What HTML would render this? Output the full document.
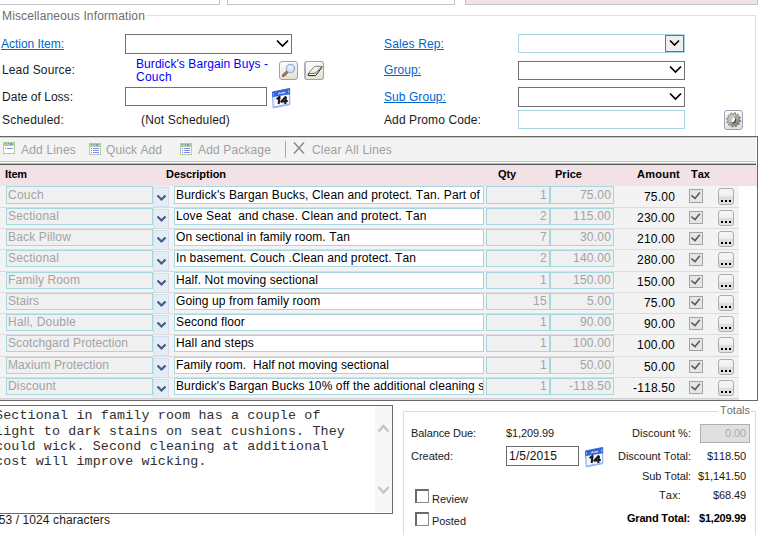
<!DOCTYPE html><html><head><meta charset="utf-8"><style>
*{box-sizing:border-box;margin:0;padding:0}
html,body{width:777px;height:535px;overflow:hidden;background:#fff}
body{position:relative;font-family:"Liberation Sans",sans-serif;font-size:12px;color:#000}
.a{position:absolute}
.tx{position:absolute;white-space:pre;font-kerning:none;font-family:"Liberation Sans",sans-serif}
.box{position:absolute;border:1px solid #707070;background:#fff}
.lb{position:absolute;border:1px solid #a9d5e2;background:#fff}
.ib{position:absolute;border:1px solid #a6d7e0;background:#f0f0f0}
.db{position:absolute;border:1px solid #a9d5e2;background:#fff}
.dd{position:absolute;background:#e4ecf6;border:1px solid #d3deea}
.sep{position:absolute;left:0;width:739px;height:1px;background:#dcdcdc}
.cb{position:absolute;width:14px;height:14px;border:1px solid #a3a3a3;background:#e6e6e6}
.btn{position:absolute;width:16px;height:17px;border:1px solid #adadad;border-radius:3px;background:linear-gradient(#f6f6f6,#f0f0f0 45%,#dcdcdc 55%,#e2e2e2)}
.ibtn{position:absolute;border:1px solid #9e9eb6;border-radius:3px;background:linear-gradient(165deg,#ffffff 0%,#f3f4ec 40%,#dce0c8 100%)}
</style></head><body>
<div class="a" style="left:-5px;top:-20px;width:225px;height:25px;border:1px solid #c4c4c4"></div>
<div class="a" style="left:227px;top:-20px;width:228px;height:25px;border:1px solid #c4c4c4"></div>
<div class="a" style="left:465px;top:-20px;width:293px;height:25px;border:1px solid #c4c4c4;background:#f2e1e5"></div>
<div class="a" style="left:146px;top:15px;width:610px;height:1px;background:#e0e0e0"></div>
<div class="a" style="left:755px;top:15px;width:1px;height:121px;background:#e0e0e0"></div>
<div class="tx" style="left:2.00px;top:9px;font-size:12px;line-height:14px;letter-spacing:0.144px;color:#6d6d6d;">Miscellaneous Information</div>
<div class="tx" style="left:1.00px;top:37px;font-size:12px;line-height:14px;letter-spacing:-0.030px;color:#0066cc;text-decoration:underline">Action Item:</div>
<div class="box" style="left:125px;top:34px;width:167px;height:20px"></div>
<svg class="a" style="left:276px;top:39px" width="13" height="9" viewBox="0 0 13 9"><path d="M1 1.5 L6.5 7 L12 1.5" fill="none" stroke="#000" stroke-width="1.75"/></svg>
<div class="tx" style="left:2.00px;top:63px;font-size:12px;line-height:14px;letter-spacing:0.135px;color:#1a1a1a;">Lead Source:</div>
<div class="tx" style="left:136.00px;top:57px;font-size:12px;line-height:14px;letter-spacing:0.069px;color:#0000ff;">Burdick&#x27;s Bargain Buys -</div>
<div class="tx" style="left:136.00px;top:70px;font-size:12px;line-height:14px;letter-spacing:0.263px;color:#0000ff;">Couch</div>
<div class="ibtn" style="left:279px;top:61px;width:19px;height:19px"></div>
<svg class="a" style="left:279px;top:61px" width="19" height="19" viewBox="0 0 19 19">
<defs><radialGradient id="lens" cx="0.45" cy="0.4" r="0.6"><stop offset="0" stop-color="#f4f8ff"/><stop offset="1" stop-color="#c4d4f2"/></radialGradient></defs>
<path d="M4.3 14.6 L8.4 10.8" stroke="#7a5230" stroke-width="2.8" stroke-linecap="round"/>
<path d="M4.3 14.6 L8.4 10.8" stroke="#b98050" stroke-width="1.4" stroke-linecap="round"/>
<circle cx="11.5" cy="7.5" r="4.2" fill="url(#lens)" stroke="#95a6cc" stroke-width="1.1"/>
</svg>
<div class="ibtn" style="left:304px;top:61px;width:20px;height:19px;border-left:2px solid #b0b0c4"></div>
<svg class="a" style="left:304px;top:61px" width="20" height="19" viewBox="0 0 20 19">
<defs><linearGradient id="erg" x1="0" y1="0" x2="1" y2="1"><stop offset="0" stop-color="#ffffff"/><stop offset="0.55" stop-color="#f0f0f0"/><stop offset="1" stop-color="#a8a8a8"/></linearGradient></defs>
<path d="M11 5.4 L17.8 5.4 L17.8 6.6 L11.6 14.6 L4.3 14.6 L4.4 12.6 Z" fill="#fff" stroke="#1e1e1e" stroke-width="1"/>
<path d="M11 5.4 L17.8 5.4 L11.4 12.3 L4.6 12.6 Z" fill="url(#erg)"/>
<path d="M4.6 12.6 L11.4 12.3 L17.8 5.6" fill="none" stroke="#444" stroke-width="0.8"/>
</svg>
<div class="tx" style="left:2.00px;top:90px;font-size:12px;line-height:14px;letter-spacing:0.023px;color:#1a1a1a;">Date of Loss:</div>
<div class="box" style="left:125px;top:87px;width:142px;height:19px"></div>
<svg class="a" style="left:272px;top:88px" width="19" height="21" viewBox="0 0 19 21">
<defs><linearGradient id="cb272" x1="0" y1="0" x2="1" y2="0.3"><stop offset="0" stop-color="#cfe0fb"/><stop offset="0.5" stop-color="#ffffff"/><stop offset="1" stop-color="#f4f8ff"/></linearGradient></defs>
<path d="M0.4 4 L17.6 0.5 L17.8 16.6 L1.2 19.9 Z" fill="url(#cb272)" stroke="#7d9be6" stroke-width="0.9"/>
<path d="M1.2 19.9 L17.8 16.6 L17.8 15.2 L1.0 18.4 Z" fill="#9fbaf0"/>
<path d="M0.4 4 L17.6 0.5 L17.6 5.9 L0.7 8.7 Z" fill="#3565d8" stroke="#2a55c8" stroke-width="0.6"/>
<path d="M1.5 5 L1.5 7.5" stroke="#88aaf0" stroke-width="1"/>
<path d="M16.5 2 L16.5 5" stroke="#88aaf0" stroke-width="1"/>
<path d="M6.2 6.4 L7.4 4.6 L8.2 6.1 M9 5.9 L9.2 4.4 M10.2 5.7 L10.4 4.2 M11.4 5.5 L11.6 4 M12.6 5.3 L12.8 3.8" fill="none" stroke="#f0f4ff" stroke-width="0.9"/>
<path d="M4.6 11.2 L7.6 8.8 L6.6 16" fill="none" stroke="#1b1b24" stroke-width="2.1" stroke-linejoin="round"/>
<path d="M14 8.4 L9.2 13.6 L15.8 13 M13.9 9 L13.3 16" fill="none" stroke="#1b1b28" stroke-width="2.1" stroke-linejoin="round"/>
</svg>
<div class="tx" style="left:2.00px;top:113px;font-size:12px;line-height:14px;letter-spacing:0.195px;color:#1a1a1a;">Scheduled:</div>
<div class="tx" style="left:141.00px;top:113px;font-size:12px;line-height:14px;letter-spacing:0.152px;color:#1a1a1a;">(Not Scheduled)</div>
<div class="tx" style="left:384.00px;top:37px;font-size:12px;line-height:14px;letter-spacing:0.130px;color:#0066cc;text-decoration:underline">Sales Rep:</div>
<div class="lb" style="left:518px;top:34px;width:167px;height:19px"></div>
<div class="a" style="left:665px;top:35px;width:19px;height:17px;background:#efefef;border:1px solid #707070"></div>
<svg class="a" style="left:669px;top:39px" width="11" height="8" viewBox="0 0 11 8"><path d="M1 1.5 L5.5 6 L10 1.5" fill="none" stroke="#000" stroke-width="1.6"/></svg>
<div class="tx" style="left:384.00px;top:63px;font-size:12px;line-height:14px;letter-spacing:0.052px;color:#0066cc;text-decoration:underline">Group:</div>
<div class="box" style="left:518px;top:61px;width:167px;height:19px"></div>
<svg class="a" style="left:669px;top:65px" width="13" height="9" viewBox="0 0 13 9"><path d="M1 1.5 L6.5 7 L12 1.5" fill="none" stroke="#000" stroke-width="1.75"/></svg>
<div class="tx" style="left:384.00px;top:90px;font-size:12px;line-height:14px;letter-spacing:0.063px;color:#0066cc;text-decoration:underline">Sub Group:</div>
<div class="box" style="left:518px;top:87px;width:167px;height:20px"></div>
<svg class="a" style="left:669px;top:92px" width="13" height="9" viewBox="0 0 13 9"><path d="M1 1.5 L6.5 7 L12 1.5" fill="none" stroke="#000" stroke-width="1.75"/></svg>
<div class="tx" style="left:384.00px;top:113px;font-size:12px;line-height:14px;letter-spacing:0.108px;color:#1a1a1a;">Add Promo Code:</div>
<div class="lb" style="left:518px;top:110px;width:167px;height:19px"></div>
<div class="ibtn" style="left:724px;top:110px;width:19px;height:20px"></div>
<svg class="a" style="left:724px;top:110px" width="19" height="20" viewBox="0 0 19 20">
<defs><linearGradient id="gg" x1="0" y1="0" x2="1" y2="1"><stop offset="0" stop-color="#e8e8e8"/><stop offset="0.55" stop-color="#a8a8a8"/><stop offset="1" stop-color="#5a5a5a"/></linearGradient></defs>
<g transform="translate(9.6,9.8)">
<path d="M5.60 0.00 L7.17 0.68 L6.95 1.86 L5.25 1.95 L4.85 2.80 L5.87 4.17 L5.09 5.09 L3.57 4.31 L2.80 4.85 L3.00 6.55 L1.86 6.95 L0.93 5.52 L0.00 5.60 L-0.68 7.17 L-1.86 6.95 L-1.95 5.25 L-2.80 4.85 L-4.17 5.87 L-5.09 5.09 L-4.31 3.57 L-4.85 2.80 L-6.55 3.00 L-6.95 1.86 L-5.52 0.93 L-5.60 0.00 L-7.17 -0.68 L-6.95 -1.86 L-5.25 -1.95 L-4.85 -2.80 L-5.87 -4.17 L-5.09 -5.09 L-3.57 -4.31 L-2.80 -4.85 L-3.00 -6.55 L-1.86 -6.95 L-0.93 -5.52 L-0.00 -5.60 L0.68 -7.17 L1.86 -6.95 L1.95 -5.25 L2.80 -4.85 L4.17 -5.87 L5.09 -5.09 L4.31 -3.57 L4.85 -2.80 L6.55 -3.00 L6.95 -1.86 L5.52 -0.93 Z" fill="url(#gg)" stroke="#6a6a6a" stroke-width="0.7"/>
<ellipse cx="0.3" cy="0.6" rx="2.3" ry="3.2" transform="rotate(25)" fill="#3c3c3c"/>
<ellipse cx="-0.4" cy="0.2" rx="1.8" ry="2.9" transform="rotate(25)" fill="#f2f2f2"/>
</g></svg>
<div class="a" style="left:-2px;top:136px;width:760px;height:265px;border:1px solid #666666;border-left:none;border-bottom:none"></div>
<div class="a" style="left:0;top:137px;width:756px;height:24px;background:#f3f3f3"></div>
<div class="a" style="left:0;top:137px;width:756px;height:1px;background:#c4c8d2"></div>
<div class="a" style="left:0;top:138px;width:756px;height:1px;background:#f8f8f6"></div>
<div class="a" style="left:0;top:160px;width:756px;height:1px;background:#f8f8f6"></div>
<div class="a" style="left:0;top:161px;width:756px;height:1px;background:#bcc0cc"></div>
<div class="a" style="left:0;top:162px;width:756px;height:1px;background:#ffffff"></div>
<div class="a" style="left:0;top:163px;width:756px;height:1px;background:#b4b8c4"></div>
<div class="a" style="left:0;top:164px;width:756px;height:1px;background:#545854"></div>
<div class="a" style="left:0;top:165px;width:757px;height:20px;background:#f2e2e5"></div>
<svg class="a" style="left:3px;top:142px" width="12" height="12" viewBox="0 0 12 12"><rect width="12" height="12" fill="#a7d1a0"/><rect x="1" y="4" width="10" height="7" fill="#fff"/><rect x="2" y="1" width="1" height="1" fill="#8d86e0"/><rect x="5" y="1" width="1" height="1" fill="#8d86e0"/><rect x="7" y="1" width="2" height="2" fill="#8d86e0"/><rect x="2" y="6" width="1" height="1" fill="#8d86e0"/><rect x="4" y="6" width="6" height="1" fill="#8d86e0"/></svg>
<div class="tx" style="left:21.00px;top:143px;font-size:12px;line-height:14px;letter-spacing:0.181px;color:#a0a0a0;">Add Lines</div>
<svg class="a" style="left:89px;top:143px" width="12" height="12" viewBox="0 0 12 12"><rect width="12" height="12" fill="#a7d1a0"/><rect x="1" y="4" width="10" height="7" fill="#fff"/><rect x="2" y="1" width="1" height="1" fill="#8d86e0"/><rect x="5" y="1" width="1" height="1" fill="#8d86e0"/><rect x="7" y="1" width="2" height="2" fill="#8d86e0"/><rect x="2" y="5" width="1" height="1" fill="#8d86e0"/><rect x="4" y="5" width="6" height="1" fill="#8d86e0"/><rect x="2" y="7" width="1" height="1" fill="#8d86e0"/><rect x="4" y="7" width="6" height="1" fill="#8d86e0"/><rect x="2" y="9" width="1" height="1" fill="#8d86e0"/><rect x="4" y="9" width="6" height="1" fill="#8d86e0"/></svg>
<div class="tx" style="left:106.00px;top:143px;font-size:12px;line-height:14px;letter-spacing:0.071px;color:#a0a0a0;">Quick Add</div>
<svg class="a" style="left:180px;top:143px" width="12" height="12" viewBox="0 0 12 12"><rect width="12" height="12" fill="#a7d1a0"/><rect x="1" y="4" width="10" height="7" fill="#fff"/><rect x="2" y="1" width="1" height="1" fill="#8d86e0"/><rect x="5" y="1" width="1" height="1" fill="#8d86e0"/><rect x="7" y="1" width="2" height="2" fill="#8d86e0"/><rect x="2" y="5" width="1" height="1" fill="#8d86e0"/><rect x="4" y="5" width="6" height="1" fill="#8d86e0"/><rect x="2" y="7" width="1" height="1" fill="#8d86e0"/><rect x="4" y="7" width="6" height="1" fill="#8d86e0"/><rect x="2" y="9" width="1" height="1" fill="#8d86e0"/><rect x="4" y="9" width="6" height="1" fill="#8d86e0"/></svg>
<div class="tx" style="left:198.00px;top:143px;font-size:12px;line-height:14px;letter-spacing:0.147px;color:#a0a0a0;">Add Package</div>
<div class="a" style="left:285px;top:141px;width:1px;height:17px;background:#aaa896"></div>
<svg class="a" style="left:292px;top:141px" width="14" height="14" viewBox="0 0 14 14"><path d="M2 1.5 L12 12.5 M12 1.5 L2 12.5" stroke="#8a8a8a" stroke-width="1.5"/></svg>
<div class="tx" style="left:312.00px;top:143px;font-size:12px;line-height:14px;letter-spacing:0.176px;color:#a0a0a0;">Clear All Lines</div>
<div class="tx" style="left:5.00px;top:168px;font-size:11px;line-height:12px;letter-spacing:-0.154px;color:#000;font-weight:bold;">Item</div>
<div class="tx" style="left:166.00px;top:168px;font-size:11px;line-height:12px;letter-spacing:-0.046px;color:#000;font-weight:bold;">Description</div>
<div class="tx" style="left:498.00px;top:168px;font-size:11px;line-height:12px;letter-spacing:-0.112px;color:#000;font-weight:bold;">Qty</div>
<div class="tx" style="left:555.00px;top:168px;font-size:11px;line-height:12px;letter-spacing:0.018px;color:#000;font-weight:bold;">Price</div>
<div class="tx" style="left:637.00px;top:168px;font-size:11px;line-height:12px;letter-spacing:0.242px;color:#000;font-weight:bold;">Amount</div>
<div class="tx" style="left:691.00px;top:168px;font-size:11px;line-height:12px;letter-spacing:0.015px;color:#000;font-weight:bold;">Tax</div>
<div class="a" style="left:0;top:185px;width:739px;height:22px;background:#f3f3f3"></div>
<div class="ib" style="left:6px;top:186px;width:147px;height:18px"></div>
<div class="dd" style="left:153px;top:187px;width:16px;height:20px"></div>
<svg class="a" style="left:156px;top:194px" width="11" height="8" viewBox="0 0 11 8"><path d="M1.5 1.5 L5.5 5.5 L9.5 1.5" fill="none" stroke="#4a5a82" stroke-width="2.2"/></svg>
<div class="db" style="left:174px;top:186px;width:310px;height:18px"></div>
<div class="ib" style="left:486px;top:186px;width:64px;height:18px"></div>
<div class="ib" style="left:550px;top:186px;width:64px;height:18px"></div>
<div class="tx" style="left:8.00px;top:188px;font-size:12px;line-height:14px;letter-spacing:0.263px;color:#a3a3a3;">Couch</div>
<div class="a" style="left:175px;top:187px;width:308px;height:16px;overflow:hidden">
<div class="tx" style="left:1px;top:1px;font-size:12px;line-height:14px;letter-spacing:0.125px;color:#000">Burdick&#x27;s Bargan Bucks, Clean and protect. Tan. Part of</div></div>
<div class="tx" style="left:540.00px;top:188px;font-size:12px;line-height:14px;letter-spacing:0.326px;color:#a3a3a3;">1</div>
<div class="tx" style="left:580.00px;top:188px;font-size:12px;line-height:14px;letter-spacing:0.194px;color:#a3a3a3;">75.00</div>
<div class="tx" style="left:644.00px;top:190px;font-size:12px;line-height:14px;letter-spacing:0.194px;color:#000;">75.00</div>
<div class="cb" style="left:689px;top:189px;height:14px"></div>
<svg class="a" style="left:689px;top:189px" width="14" height="14" viewBox="0 0 14 14"><path d="M2.4 6.4 L6 9.4 L10.8 3.6" fill="none" stroke="#5e5650" stroke-width="1.5"/></svg>
<div class="btn" style="left:718px;top:188px;height:17px"></div>
<svg class="a" style="left:718px;top:188px" width="16" height="17" viewBox="0 0 16 17"><rect x="3" y="12" width="2" height="2" fill="#000"/><rect x="7" y="12" width="2" height="2" fill="#000"/><rect x="11" y="12" width="2" height="2" fill="#000"/></svg>
<div class="a" style="left:0;top:207px;width:739px;height:21px;background:#f3f3f3"></div>
<div class="sep" style="top:207px"></div>
<div class="ib" style="left:6px;top:208px;width:147px;height:17px"></div>
<div class="dd" style="left:153px;top:209px;width:16px;height:20px"></div>
<svg class="a" style="left:156px;top:215px" width="11" height="8" viewBox="0 0 11 8"><path d="M1.5 1.5 L5.5 5.5 L9.5 1.5" fill="none" stroke="#4a5a82" stroke-width="2.2"/></svg>
<div class="db" style="left:174px;top:208px;width:310px;height:17px"></div>
<div class="ib" style="left:486px;top:208px;width:64px;height:17px"></div>
<div class="ib" style="left:550px;top:208px;width:64px;height:17px"></div>
<div class="tx" style="left:8.00px;top:209px;font-size:12px;line-height:14px;letter-spacing:0.182px;color:#a3a3a3;">Sectional</div>
<div class="a" style="left:175px;top:209px;width:308px;height:16px;overflow:hidden">
<div class="tx" style="left:1px;top:0px;font-size:12px;line-height:14px;letter-spacing:0.129px;color:#000">Love Seat  and chase. Clean and protect. Tan</div></div>
<div class="tx" style="left:540.00px;top:209px;font-size:12px;line-height:14px;letter-spacing:0.326px;color:#a3a3a3;">2</div>
<div class="tx" style="left:573.00px;top:209px;font-size:12px;line-height:14px;letter-spacing:0.216px;color:#a3a3a3;">115.00</div>
<div class="tx" style="left:637.00px;top:211px;font-size:12px;line-height:14px;letter-spacing:0.216px;color:#000;">230.00</div>
<div class="cb" style="left:689px;top:211px;height:13px"></div>
<svg class="a" style="left:689px;top:211px" width="14" height="14" viewBox="0 0 14 14"><path d="M2.4 5.6 L6 8.6 L10.8 2.8" fill="none" stroke="#5e5650" stroke-width="1.5"/></svg>
<div class="btn" style="left:718px;top:210px;height:16px"></div>
<svg class="a" style="left:718px;top:210px" width="16" height="17" viewBox="0 0 16 17"><rect x="3" y="11" width="2" height="2" fill="#000"/><rect x="7" y="11" width="2" height="2" fill="#000"/><rect x="11" y="11" width="2" height="2" fill="#000"/></svg>
<div class="a" style="left:0;top:228px;width:739px;height:21px;background:#f3f3f3"></div>
<div class="sep" style="top:228px"></div>
<div class="ib" style="left:6px;top:229px;width:147px;height:17px"></div>
<div class="dd" style="left:153px;top:230px;width:16px;height:20px"></div>
<svg class="a" style="left:156px;top:236px" width="11" height="8" viewBox="0 0 11 8"><path d="M1.5 1.5 L5.5 5.5 L9.5 1.5" fill="none" stroke="#4a5a82" stroke-width="2.2"/></svg>
<div class="db" style="left:174px;top:229px;width:310px;height:17px"></div>
<div class="ib" style="left:486px;top:229px;width:64px;height:17px"></div>
<div class="ib" style="left:550px;top:229px;width:64px;height:17px"></div>
<div class="tx" style="left:8.00px;top:230px;font-size:12px;line-height:14px;letter-spacing:0.150px;color:#a3a3a3;">Back Pillow</div>
<div class="a" style="left:175px;top:230px;width:308px;height:16px;overflow:hidden">
<div class="tx" style="left:1px;top:0px;font-size:12px;line-height:14px;letter-spacing:0.060px;color:#000">On sectional in family room. Tan</div></div>
<div class="tx" style="left:540.00px;top:230px;font-size:12px;line-height:14px;letter-spacing:0.326px;color:#a3a3a3;">7</div>
<div class="tx" style="left:580.00px;top:230px;font-size:12px;line-height:14px;letter-spacing:0.194px;color:#a3a3a3;">30.00</div>
<div class="tx" style="left:637.00px;top:232px;font-size:12px;line-height:14px;letter-spacing:0.216px;color:#000;">210.00</div>
<div class="cb" style="left:689px;top:232px;height:13px"></div>
<svg class="a" style="left:689px;top:232px" width="14" height="14" viewBox="0 0 14 14"><path d="M2.4 5.6 L6 8.6 L10.8 2.8" fill="none" stroke="#5e5650" stroke-width="1.5"/></svg>
<div class="btn" style="left:718px;top:231px;height:16px"></div>
<svg class="a" style="left:718px;top:231px" width="16" height="17" viewBox="0 0 16 17"><rect x="3" y="11" width="2" height="2" fill="#000"/><rect x="7" y="11" width="2" height="2" fill="#000"/><rect x="11" y="11" width="2" height="2" fill="#000"/></svg>
<div class="a" style="left:0;top:249px;width:739px;height:22px;background:#f3f3f3"></div>
<div class="sep" style="top:249px"></div>
<div class="ib" style="left:6px;top:250px;width:147px;height:17px"></div>
<div class="dd" style="left:153px;top:251px;width:16px;height:20px"></div>
<svg class="a" style="left:156px;top:258px" width="11" height="8" viewBox="0 0 11 8"><path d="M1.5 1.5 L5.5 5.5 L9.5 1.5" fill="none" stroke="#4a5a82" stroke-width="2.2"/></svg>
<div class="db" style="left:174px;top:250px;width:310px;height:17px"></div>
<div class="ib" style="left:486px;top:250px;width:64px;height:17px"></div>
<div class="ib" style="left:550px;top:250px;width:64px;height:17px"></div>
<div class="tx" style="left:8.00px;top:251px;font-size:12px;line-height:14px;letter-spacing:0.182px;color:#a3a3a3;">Sectional</div>
<div class="a" style="left:175px;top:251px;width:308px;height:16px;overflow:hidden">
<div class="tx" style="left:1px;top:0px;font-size:12px;line-height:14px;letter-spacing:0.092px;color:#000">In basement. Couch .Clean and protect. Tan</div></div>
<div class="tx" style="left:540.00px;top:251px;font-size:12px;line-height:14px;letter-spacing:0.326px;color:#a3a3a3;">2</div>
<div class="tx" style="left:573.00px;top:251px;font-size:12px;line-height:14px;letter-spacing:0.216px;color:#a3a3a3;">140.00</div>
<div class="tx" style="left:637.00px;top:253px;font-size:12px;line-height:14px;letter-spacing:0.216px;color:#000;">280.00</div>
<div class="cb" style="left:689px;top:253px;height:13px"></div>
<svg class="a" style="left:689px;top:253px" width="14" height="14" viewBox="0 0 14 14"><path d="M2.4 5.6 L6 8.6 L10.8 2.8" fill="none" stroke="#5e5650" stroke-width="1.5"/></svg>
<div class="btn" style="left:718px;top:252px;height:16px"></div>
<svg class="a" style="left:718px;top:252px" width="16" height="17" viewBox="0 0 16 17"><rect x="3" y="11" width="2" height="2" fill="#000"/><rect x="7" y="11" width="2" height="2" fill="#000"/><rect x="11" y="11" width="2" height="2" fill="#000"/></svg>
<div class="a" style="left:0;top:271px;width:739px;height:21px;background:#f3f3f3"></div>
<div class="sep" style="top:271px"></div>
<div class="ib" style="left:6px;top:272px;width:147px;height:17px"></div>
<div class="dd" style="left:153px;top:273px;width:16px;height:20px"></div>
<svg class="a" style="left:156px;top:279px" width="11" height="8" viewBox="0 0 11 8"><path d="M1.5 1.5 L5.5 5.5 L9.5 1.5" fill="none" stroke="#4a5a82" stroke-width="2.2"/></svg>
<div class="db" style="left:174px;top:272px;width:310px;height:17px"></div>
<div class="ib" style="left:486px;top:272px;width:64px;height:17px"></div>
<div class="ib" style="left:550px;top:272px;width:64px;height:17px"></div>
<div class="tx" style="left:8.00px;top:273px;font-size:12px;line-height:14px;letter-spacing:0.120px;color:#a3a3a3;">Family Room</div>
<div class="a" style="left:175px;top:273px;width:308px;height:16px;overflow:hidden">
<div class="tx" style="left:1px;top:0px;font-size:12px;line-height:14px;letter-spacing:0.100px;color:#000">Half. Not moving sectional</div></div>
<div class="tx" style="left:540.00px;top:273px;font-size:12px;line-height:14px;letter-spacing:0.326px;color:#a3a3a3;">1</div>
<div class="tx" style="left:573.00px;top:273px;font-size:12px;line-height:14px;letter-spacing:0.216px;color:#a3a3a3;">150.00</div>
<div class="tx" style="left:637.00px;top:275px;font-size:12px;line-height:14px;letter-spacing:0.216px;color:#000;">150.00</div>
<div class="cb" style="left:689px;top:275px;height:13px"></div>
<svg class="a" style="left:689px;top:275px" width="14" height="14" viewBox="0 0 14 14"><path d="M2.4 5.6 L6 8.6 L10.8 2.8" fill="none" stroke="#5e5650" stroke-width="1.5"/></svg>
<div class="btn" style="left:718px;top:274px;height:16px"></div>
<svg class="a" style="left:718px;top:274px" width="16" height="17" viewBox="0 0 16 17"><rect x="3" y="11" width="2" height="2" fill="#000"/><rect x="7" y="11" width="2" height="2" fill="#000"/><rect x="11" y="11" width="2" height="2" fill="#000"/></svg>
<div class="a" style="left:0;top:292px;width:739px;height:21px;background:#f3f3f3"></div>
<div class="sep" style="top:292px"></div>
<div class="ib" style="left:6px;top:293px;width:147px;height:17px"></div>
<div class="dd" style="left:153px;top:294px;width:16px;height:20px"></div>
<svg class="a" style="left:156px;top:300px" width="11" height="8" viewBox="0 0 11 8"><path d="M1.5 1.5 L5.5 5.5 L9.5 1.5" fill="none" stroke="#4a5a82" stroke-width="2.2"/></svg>
<div class="db" style="left:174px;top:293px;width:310px;height:17px"></div>
<div class="ib" style="left:486px;top:293px;width:64px;height:17px"></div>
<div class="ib" style="left:550px;top:293px;width:64px;height:17px"></div>
<div class="tx" style="left:8.00px;top:294px;font-size:12px;line-height:14px;letter-spacing:0.054px;color:#a3a3a3;">Stairs</div>
<div class="a" style="left:175px;top:294px;width:308px;height:16px;overflow:hidden">
<div class="tx" style="left:1px;top:0px;font-size:12px;line-height:14px;letter-spacing:0.117px;color:#000">Going up from family room</div></div>
<div class="tx" style="left:533.00px;top:294px;font-size:12px;line-height:14px;letter-spacing:0.326px;color:#a3a3a3;">15</div>
<div class="tx" style="left:587.00px;top:294px;font-size:12px;line-height:14px;letter-spacing:0.161px;color:#a3a3a3;">5.00</div>
<div class="tx" style="left:644.00px;top:296px;font-size:12px;line-height:14px;letter-spacing:0.194px;color:#000;">75.00</div>
<div class="cb" style="left:689px;top:296px;height:13px"></div>
<svg class="a" style="left:689px;top:296px" width="14" height="14" viewBox="0 0 14 14"><path d="M2.4 5.6 L6 8.6 L10.8 2.8" fill="none" stroke="#5e5650" stroke-width="1.5"/></svg>
<div class="btn" style="left:718px;top:295px;height:16px"></div>
<svg class="a" style="left:718px;top:295px" width="16" height="17" viewBox="0 0 16 17"><rect x="3" y="11" width="2" height="2" fill="#000"/><rect x="7" y="11" width="2" height="2" fill="#000"/><rect x="11" y="11" width="2" height="2" fill="#000"/></svg>
<div class="a" style="left:0;top:313px;width:739px;height:21px;background:#f3f3f3"></div>
<div class="sep" style="top:313px"></div>
<div class="ib" style="left:6px;top:314px;width:147px;height:17px"></div>
<div class="dd" style="left:153px;top:315px;width:16px;height:20px"></div>
<svg class="a" style="left:156px;top:321px" width="11" height="8" viewBox="0 0 11 8"><path d="M1.5 1.5 L5.5 5.5 L9.5 1.5" fill="none" stroke="#4a5a82" stroke-width="2.2"/></svg>
<div class="db" style="left:174px;top:314px;width:310px;height:17px"></div>
<div class="ib" style="left:486px;top:314px;width:64px;height:17px"></div>
<div class="ib" style="left:550px;top:314px;width:64px;height:17px"></div>
<div class="tx" style="left:8.00px;top:315px;font-size:12px;line-height:14px;letter-spacing:0.219px;color:#a3a3a3;">Hall, Double</div>
<div class="a" style="left:175px;top:315px;width:308px;height:16px;overflow:hidden">
<div class="tx" style="left:1px;top:0px;font-size:12px;line-height:14px;letter-spacing:0.135px;color:#000">Second floor</div></div>
<div class="tx" style="left:540.00px;top:315px;font-size:12px;line-height:14px;letter-spacing:0.326px;color:#a3a3a3;">1</div>
<div class="tx" style="left:580.00px;top:315px;font-size:12px;line-height:14px;letter-spacing:0.194px;color:#a3a3a3;">90.00</div>
<div class="tx" style="left:644.00px;top:317px;font-size:12px;line-height:14px;letter-spacing:0.194px;color:#000;">90.00</div>
<div class="cb" style="left:689px;top:317px;height:13px"></div>
<svg class="a" style="left:689px;top:317px" width="14" height="14" viewBox="0 0 14 14"><path d="M2.4 5.6 L6 8.6 L10.8 2.8" fill="none" stroke="#5e5650" stroke-width="1.5"/></svg>
<div class="btn" style="left:718px;top:316px;height:16px"></div>
<svg class="a" style="left:718px;top:316px" width="16" height="17" viewBox="0 0 16 17"><rect x="3" y="11" width="2" height="2" fill="#000"/><rect x="7" y="11" width="2" height="2" fill="#000"/><rect x="11" y="11" width="2" height="2" fill="#000"/></svg>
<div class="a" style="left:0;top:334px;width:739px;height:22px;background:#f3f3f3"></div>
<div class="sep" style="top:334px"></div>
<div class="ib" style="left:6px;top:335px;width:147px;height:17px"></div>
<div class="dd" style="left:153px;top:336px;width:16px;height:20px"></div>
<svg class="a" style="left:156px;top:343px" width="11" height="8" viewBox="0 0 11 8"><path d="M1.5 1.5 L5.5 5.5 L9.5 1.5" fill="none" stroke="#4a5a82" stroke-width="2.2"/></svg>
<div class="db" style="left:174px;top:335px;width:310px;height:17px"></div>
<div class="ib" style="left:486px;top:335px;width:64px;height:17px"></div>
<div class="ib" style="left:550px;top:335px;width:64px;height:17px"></div>
<div class="tx" style="left:8.00px;top:336px;font-size:12px;line-height:14px;letter-spacing:0.092px;color:#a3a3a3;">Scotchgard Protection</div>
<div class="a" style="left:175px;top:336px;width:308px;height:16px;overflow:hidden">
<div class="tx" style="left:1px;top:0px;font-size:12px;line-height:14px;letter-spacing:0.140px;color:#000">Hall and steps</div></div>
<div class="tx" style="left:540.00px;top:336px;font-size:12px;line-height:14px;letter-spacing:0.326px;color:#a3a3a3;">1</div>
<div class="tx" style="left:573.00px;top:336px;font-size:12px;line-height:14px;letter-spacing:0.216px;color:#a3a3a3;">100.00</div>
<div class="tx" style="left:637.00px;top:338px;font-size:12px;line-height:14px;letter-spacing:0.216px;color:#000;">100.00</div>
<div class="cb" style="left:689px;top:338px;height:13px"></div>
<svg class="a" style="left:689px;top:338px" width="14" height="14" viewBox="0 0 14 14"><path d="M2.4 5.6 L6 8.6 L10.8 2.8" fill="none" stroke="#5e5650" stroke-width="1.5"/></svg>
<div class="btn" style="left:718px;top:337px;height:16px"></div>
<svg class="a" style="left:718px;top:337px" width="16" height="17" viewBox="0 0 16 17"><rect x="3" y="11" width="2" height="2" fill="#000"/><rect x="7" y="11" width="2" height="2" fill="#000"/><rect x="11" y="11" width="2" height="2" fill="#000"/></svg>
<div class="a" style="left:0;top:356px;width:739px;height:21px;background:#f3f3f3"></div>
<div class="sep" style="top:356px"></div>
<div class="ib" style="left:6px;top:357px;width:147px;height:17px"></div>
<div class="dd" style="left:153px;top:358px;width:16px;height:20px"></div>
<svg class="a" style="left:156px;top:364px" width="11" height="8" viewBox="0 0 11 8"><path d="M1.5 1.5 L5.5 5.5 L9.5 1.5" fill="none" stroke="#4a5a82" stroke-width="2.2"/></svg>
<div class="db" style="left:174px;top:357px;width:310px;height:17px"></div>
<div class="ib" style="left:486px;top:357px;width:64px;height:17px"></div>
<div class="ib" style="left:550px;top:357px;width:64px;height:17px"></div>
<div class="tx" style="left:8.00px;top:358px;font-size:12px;line-height:14px;letter-spacing:0.096px;color:#a3a3a3;">Maxium Protection</div>
<div class="a" style="left:175px;top:358px;width:308px;height:16px;overflow:hidden">
<div class="tx" style="left:1px;top:0px;font-size:12px;line-height:14px;letter-spacing:0.075px;color:#000">Family room.  Half not moving sectional</div></div>
<div class="tx" style="left:540.00px;top:358px;font-size:12px;line-height:14px;letter-spacing:0.326px;color:#a3a3a3;">1</div>
<div class="tx" style="left:580.00px;top:358px;font-size:12px;line-height:14px;letter-spacing:0.194px;color:#a3a3a3;">50.00</div>
<div class="tx" style="left:644.00px;top:360px;font-size:12px;line-height:14px;letter-spacing:0.194px;color:#000;">50.00</div>
<div class="cb" style="left:689px;top:360px;height:13px"></div>
<svg class="a" style="left:689px;top:360px" width="14" height="14" viewBox="0 0 14 14"><path d="M2.4 5.6 L6 8.6 L10.8 2.8" fill="none" stroke="#5e5650" stroke-width="1.5"/></svg>
<div class="btn" style="left:718px;top:359px;height:16px"></div>
<svg class="a" style="left:718px;top:359px" width="16" height="17" viewBox="0 0 16 17"><rect x="3" y="11" width="2" height="2" fill="#000"/><rect x="7" y="11" width="2" height="2" fill="#000"/><rect x="11" y="11" width="2" height="2" fill="#000"/></svg>
<div class="a" style="left:0;top:377px;width:739px;height:21px;background:#f3f3f3"></div>
<div class="sep" style="top:377px"></div>
<div class="ib" style="left:6px;top:378px;width:147px;height:17px"></div>
<div class="dd" style="left:153px;top:379px;width:16px;height:20px"></div>
<svg class="a" style="left:156px;top:385px" width="11" height="8" viewBox="0 0 11 8"><path d="M1.5 1.5 L5.5 5.5 L9.5 1.5" fill="none" stroke="#4a5a82" stroke-width="2.2"/></svg>
<div class="db" style="left:174px;top:378px;width:310px;height:17px"></div>
<div class="ib" style="left:486px;top:378px;width:64px;height:17px"></div>
<div class="ib" style="left:550px;top:378px;width:64px;height:17px"></div>
<div class="tx" style="left:8.00px;top:379px;font-size:12px;line-height:14px;letter-spacing:0.164px;color:#a3a3a3;">Discount</div>
<div class="a" style="left:175px;top:379px;width:308px;height:16px;overflow:hidden">
<div class="tx" style="left:1px;top:0px;font-size:12px;line-height:14px;letter-spacing:0.105px;color:#000">Burdick&#x27;s Bargan Bucks 10% off the additional cleaning service</div></div>
<div class="tx" style="left:540.00px;top:379px;font-size:12px;line-height:14px;letter-spacing:0.326px;color:#a3a3a3;">1</div>
<div class="tx" style="left:569.00px;top:379px;font-size:12px;line-height:14px;letter-spacing:0.186px;color:#a3a3a3;">-118.50</div>
<div class="tx" style="left:633.00px;top:381px;font-size:12px;line-height:14px;letter-spacing:0.186px;color:#000;">-118.50</div>
<div class="cb" style="left:689px;top:381px;height:13px"></div>
<svg class="a" style="left:689px;top:381px" width="14" height="14" viewBox="0 0 14 14"><path d="M2.4 5.6 L6 8.6 L10.8 2.8" fill="none" stroke="#5e5650" stroke-width="1.5"/></svg>
<div class="btn" style="left:718px;top:380px;height:16px"></div>
<svg class="a" style="left:718px;top:380px" width="16" height="17" viewBox="0 0 16 17"><rect x="3" y="11" width="2" height="2" fill="#000"/><rect x="7" y="11" width="2" height="2" fill="#000"/><rect x="11" y="11" width="2" height="2" fill="#000"/></svg>
<div class="a" style="left:0;top:398px;width:739px;height:1px;background:#d2d2d2"></div>
<div class="a" style="left:0;top:399px;width:739px;height:1px;background:#e0e0e0"></div>
<div class="a" style="left:0;top:400px;width:758px;height:1px;background:#686868"></div>
<div class="a" style="left:0;top:185px;width:757px;height:1px;background:#e6e6e6"></div>
<div class="a" style="left:-6px;top:405px;width:399px;height:109px;border:1px solid #6b6b6b"></div>
<div class="a" style="left:375px;top:406px;width:17px;height:106px;background:#f7f7f7"></div>
<svg class="a" style="left:377px;top:423px" width="13" height="11" viewBox="0 0 13 11"><path d="M1.5 8.5 L6.5 3 L11.5 8.5" fill="none" stroke="#c3c3c3" stroke-width="2.2"/></svg>
<svg class="a" style="left:377px;top:485px" width="13" height="11" viewBox="0 0 13 11"><path d="M1.5 2 L6.5 7.5 L11.5 2" fill="none" stroke="#c3c3c3" stroke-width="2.2"/></svg>
<div class="a" style="left:-5px;top:408px;font-family:'Liberation Mono',monospace;font-size:13.333px;line-height:15px;letter-spacing:0.14px;white-space:pre;color:#303030">Sectional in family room has a couple of</div>
<div class="a" style="left:-5px;top:424px;font-family:'Liberation Mono',monospace;font-size:13.333px;line-height:15px;letter-spacing:0.14px;white-space:pre;color:#303030">light to dark stains on seat cushions. They</div>
<div class="a" style="left:-5px;top:439px;font-family:'Liberation Mono',monospace;font-size:13.333px;line-height:15px;letter-spacing:0.14px;white-space:pre;color:#303030">could wick. Second cleaning at additional</div>
<div class="a" style="left:-5px;top:454px;font-family:'Liberation Mono',monospace;font-size:13.333px;line-height:15px;letter-spacing:0.14px;white-space:pre;color:#303030">cost will improve wicking.</div>
<div class="tx" style="left:-8.00px;top:513px;font-size:12px;line-height:14px;letter-spacing:0.092px;color:#1a1a1a;">153 / 1024 characters</div>
<div class="a" style="left:403px;top:411px;width:315px;height:1px;background:#dddddd"></div>
<div class="a" style="left:751px;top:411px;width:5px;height:1px;background:#dddddd"></div>
<div class="a" style="left:403px;top:411px;width:1px;height:130px;background:#dddddd"></div>
<div class="a" style="left:755px;top:411px;width:1px;height:130px;background:#dddddd"></div>
<div class="tx" style="left:720.00px;top:404px;font-size:11px;line-height:12px;letter-spacing:0.008px;color:#6d6d6d;">Totals</div>
<div class="tx" style="left:411.00px;top:427px;font-size:11px;line-height:12px;letter-spacing:-0.087px;color:#1a1a1a;">Balance Due:</div>
<div class="tx" style="left:506.00px;top:427px;font-size:11px;line-height:12px;letter-spacing:-0.104px;color:#1a1a1a;">$1,209.99</div>
<div class="tx" style="left:411.00px;top:450px;font-size:11px;line-height:12px;letter-spacing:-0.024px;color:#1a1a1a;">Created:</div>
<div class="box" style="left:506px;top:446px;width:73px;height:20px;border-color:#6b6b6b"></div>
<div class="tx" style="left:509.00px;top:449px;font-size:12px;line-height:14px;letter-spacing:0.161px;color:#111;">1/5/2015</div>
<svg class="a" style="left:585px;top:447px" width="19" height="21" viewBox="0 0 19 21">
<defs><linearGradient id="cb585" x1="0" y1="0" x2="1" y2="0.3"><stop offset="0" stop-color="#cfe0fb"/><stop offset="0.5" stop-color="#ffffff"/><stop offset="1" stop-color="#f4f8ff"/></linearGradient></defs>
<path d="M0.4 4 L17.6 0.5 L17.8 16.6 L1.2 19.9 Z" fill="url(#cb585)" stroke="#7d9be6" stroke-width="0.9"/>
<path d="M1.2 19.9 L17.8 16.6 L17.8 15.2 L1.0 18.4 Z" fill="#9fbaf0"/>
<path d="M0.4 4 L17.6 0.5 L17.6 5.9 L0.7 8.7 Z" fill="#3565d8" stroke="#2a55c8" stroke-width="0.6"/>
<path d="M1.5 5 L1.5 7.5" stroke="#88aaf0" stroke-width="1"/>
<path d="M16.5 2 L16.5 5" stroke="#88aaf0" stroke-width="1"/>
<path d="M6.2 6.4 L7.4 4.6 L8.2 6.1 M9 5.9 L9.2 4.4 M10.2 5.7 L10.4 4.2 M11.4 5.5 L11.6 4 M12.6 5.3 L12.8 3.8" fill="none" stroke="#f0f4ff" stroke-width="0.9"/>
<path d="M4.6 11.2 L7.6 8.8 L6.6 16" fill="none" stroke="#1b1b24" stroke-width="2.1" stroke-linejoin="round"/>
<path d="M14 8.4 L9.2 13.6 L15.8 13 M13.9 9 L13.3 16" fill="none" stroke="#1b1b28" stroke-width="2.1" stroke-linejoin="round"/>
</svg>
<div class="tx" style="left:632.00px;top:427px;font-size:11px;line-height:12px;letter-spacing:0.028px;color:#1a1a1a;">Discount %:</div>
<div class="a" style="left:700px;top:424px;width:50px;height:19px;background:#e0e0e0;border:1px solid #b0b0b0"></div>
<div class="tx" style="left:725.00px;top:427px;font-size:11px;line-height:12px;letter-spacing:-0.102px;color:#a8a8a8;">0.00</div>
<div class="tx" style="left:618.00px;top:450px;font-size:11px;line-height:12px;letter-spacing:-0.024px;color:#1a1a1a;">Discount Total:</div>
<div class="tx" style="left:707.00px;top:450px;font-size:11px;line-height:12px;letter-spacing:-0.109px;color:#1a1a1a;">$118.50</div>
<div class="tx" style="left:642.00px;top:470px;font-size:11px;line-height:12px;letter-spacing:-0.114px;color:#1a1a1a;">Sub Total:</div>
<div class="tx" style="left:698.00px;top:470px;font-size:11px;line-height:12px;letter-spacing:-0.104px;color:#1a1a1a;">$1,141.50</div>
<div class="tx" style="left:659.00px;top:489px;font-size:11px;line-height:12px;letter-spacing:0.152px;color:#1a1a1a;">Tax:</div>
<div class="tx" style="left:713.00px;top:489px;font-size:11px;line-height:12px;letter-spacing:-0.107px;color:#1a1a1a;">$68.49</div>
<div class="tx" style="left:627.00px;top:512px;font-size:11px;line-height:12px;letter-spacing:-0.199px;color:#000;font-weight:bold;">Grand Total:</div>
<div class="tx" style="left:699.00px;top:512px;font-size:11px;line-height:12px;letter-spacing:-0.215px;color:#000;font-weight:bold;">$1,209.99</div>
<div class="a" style="left:415px;top:489px;width:14px;height:14px;border:1px solid #8a8a8a;border-left:2px solid #6a6a6a;border-top:2px solid #6a6a6a;background:#fff"></div>
<div class="tx" style="left:432.00px;top:493px;font-size:11px;line-height:12px;letter-spacing:-0.011px;color:#1a1a1a;">Review</div>
<div class="a" style="left:415px;top:512px;width:14px;height:14px;border:1px solid #8a8a8a;border-left:2px solid #6a6a6a;border-top:2px solid #6a6a6a;background:#fff"></div>
<div class="tx" style="left:432.00px;top:515px;font-size:11px;line-height:12px;letter-spacing:-0.041px;color:#1a1a1a;">Posted</div>
</body></html>
